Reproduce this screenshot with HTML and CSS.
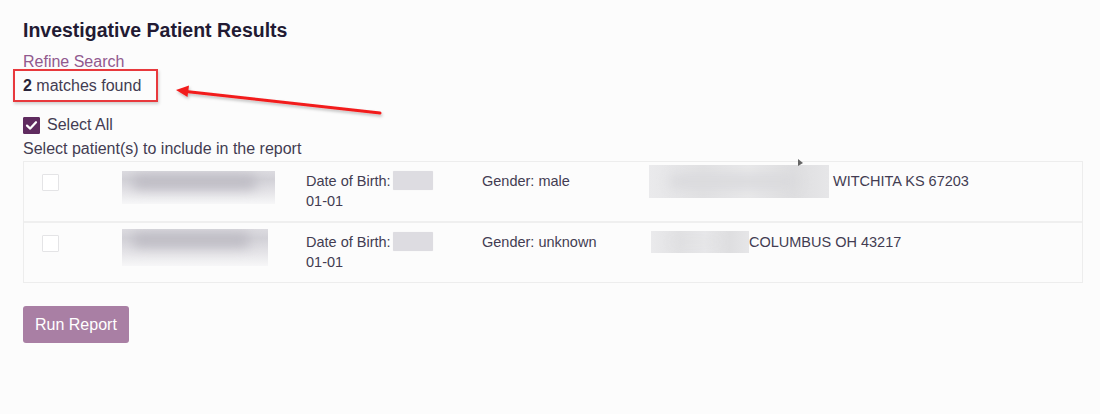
FILE: index.html
```html
<!DOCTYPE html>
<html lang="en">
<head>
<meta charset="utf-8">
<title>Investigative Patient Results</title>
<link rel="stylesheet" href="styles.css">
</head>
<body>
<main class="page">
  <h1 class="title">Investigative Patient Results</h1>
  <a class="refine" href="#">Refine Search</a>
  <div class="matches"><b>2</b> matches found</div>
  <label class="select-all">
    <span class="cb cb-checked">
      <svg viewBox="0 0 17 17" width="17" height="17"><path d="M4 8.6 L7.2 11.6 L13 5.2" fill="none" stroke="#fff" stroke-width="2.2" stroke-linecap="round" stroke-linejoin="round"/></svg>
    </span>
    <span>Select All</span>
  </label>
  <div class="hint">Select patient(s) to include in the report</div>

  <div class="results">
    <div class="row">
      <div class="cell"><span class="cb"></span></div>
      <div class="cell"><div class="blur blur-name n1"><i></i></div></div>
      <div class="cell dob">Date of Birth: <span class="blur-year"></span><br>01-01</div>
      <div class="cell">Gender: male</div>
      <div class="cell addr"><div class="blur blur-addr a1"><i></i></div><span>WITCHITA KS 67203</span></div>
    </div>
    <div class="row">
      <div class="cell"><span class="cb"></span></div>
      <div class="cell"><div class="blur blur-name n2"><i></i></div></div>
      <div class="cell dob">Date of Birth: <span class="blur-year"></span><br>01-01</div>
      <div class="cell">Gender: unknown</div>
      <div class="cell addr"><div class="blur blur-addr a2"><i></i></div><span>COLUMBUS OH 43217</span></div>
    </div>
  </div>

  <button class="run" type="button">Run Report</button>

  <div class="callout-box"></div>
  <svg class="callout-arrow" width="220" height="40" viewBox="0 0 220 40">
    <defs>
      <filter id="sh" x="-10%" y="-50%" width="120%" height="200%">
        <feDropShadow dx="1" dy="2" stdDeviation="1.5" flood-color="#000" flood-opacity="0.25"/>
      </filter>
    </defs>
    <g filter="url(#sh)">
      <line x1="208" y1="31" x2="14" y2="9.5" stroke="#f21c1c" stroke-width="3" stroke-linecap="round"/>
      <path d="M4 8 L17 3.5 L15.5 15 Z" fill="#f21c1c"/>
    </g>
  </svg>
  <svg class="cursor" width="8" height="8" viewBox="0 0 8 8"><path d="M0 0 L0 7 L5 4 Z" fill="#666"/></svg>
</main>
</body>
</html>
```
FILE: styles.css
```css
html, body {
  margin: 0;
  padding: 0;
  background: #fcfcfc;
}
body {
  font-family: "Liberation Sans", Arial, sans-serif;
  font-size: 16px;
  line-height: 24px;
  color: #433c52;
}
.page {
  position: relative;
  padding: 18px 17px 0 23px;
  height: 414px;
  box-sizing: border-box;
  display: flex;
  flex-direction: column;
  align-items: flex-start;
}
.title {
  margin: 0;
  font-size: 19.5px;
  line-height: 24px;
  font-weight: bold;
  color: #221a33;
}
.refine {
  margin-top: 8px;
  color: #91598e;
  text-decoration: none;
  display: block;
}
.matches b { color: #2a2338; }
.select-all {
  margin-top: 15px;
  display: flex;
  align-items: center;
  gap: 7px;
}
.cb {
  display: inline-block;
  width: 17px;
  height: 17px;
  box-sizing: border-box;
  background: #fff;
  border: 1px solid #e4e4e6;
  border-radius: 1px;
}
.cb-checked {
  background: #5f2b5f;
  border-color: #5f2b5f;
  position: relative;
}
.cb-checked svg {
  position: absolute;
  left: -1px;
  top: -1px;
}

.results {
  width: 1060px;
  box-sizing: border-box;
  border: 1px solid #ededed;
  background: #fcfcfc;
  font-size: 14.5px;
}
.row {
  display: grid;
  grid-template-columns: 80px 184px 176px 167px 1fr;
  height: 59px;
  padding: 9px 0 0 18px;
  box-sizing: border-box;
  line-height: 20px;
}
.row + .row {
  border-top: 2px solid #efefef;
  height: 61px;
}
.cell {
  display: flex;
  align-items: flex-start;
}
.row .cb { margin-top: 3px; }
.dob { display: block; }
.blur-year {
  display: inline-block;
  width: 40px;
  height: 19px;
  vertical-align: -4px;
  margin-left: -2px;
  background: #dddce1;
  border-radius: 1px;
  box-shadow: 0 0 1px #e6e5e9;
}
.blur {
  position: relative;
  overflow: hidden;
}
.blur i {
  position: absolute;
  display: block;
  filter: blur(6px);
}
.blur-name {
  background: linear-gradient(to bottom, #dcdbe0 0%, #d2d1d7 25%, #e3e2e6 60%, #f7f7f8 100%);
}
.blur-name.n1 { width: 153px; height: 33px; }
.blur-name.n2 { width: 146px; height: 37px; margin-top: -3px; }
.blur-name i {
  left: 10px; right: 18px; top: 4px; height: 14px;
  background: #bdbbc3;
  border-radius: 8px;
}
.addr { gap: 4px; }
.blur-addr {
  background: linear-gradient(to right, #eaeaec 0%, #e1e1e3 30%, #e8e8ea 55%, #dedee0 80%, #e6e6e8 100%);
}
.blur-addr.a1 { width: 180px; height: 33px; margin-top: -6px; }
.blur-addr.a2 { width: 98px; height: 22px; margin-top: -1px; margin-left: 2px; }
.blur-addr i {
  left: 20px; right: 30px; top: 10px; bottom: 10px;
  background: #d9d9dc;
  border-radius: 8px;
}
.a2 + span { margin-left: -4px; }

.run {
  margin-top: 23px;
  font-family: "Liberation Sans", Arial, sans-serif;
  font-size: 16px;
  line-height: 19px;
  padding: 9px 12px;
  color: #fff;
  background: #a97fa4;
  border: 0;
  border-radius: 3px;
}

.callout-box {
  position: absolute;
  left: 13px;
  top: 69px;
  width: 145px;
  height: 33px;
  box-sizing: border-box;
  border: 2px solid #e8393d;
  box-shadow: 1px 2px 3px rgba(0,0,0,0.18);
}
.callout-arrow {
  position: absolute;
  left: 172px;
  top: 82px;
}
.cursor {
  position: absolute;
  left: 798px;
  top: 159px;
}
```
